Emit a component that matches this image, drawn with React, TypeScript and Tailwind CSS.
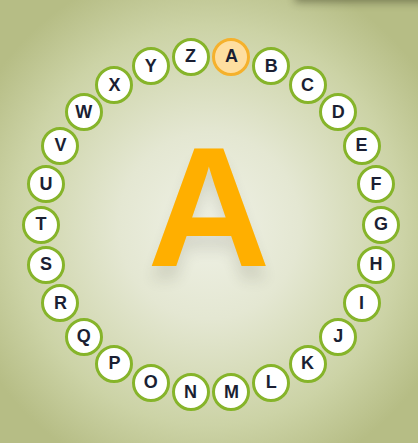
import React from "react";

const letters = "ABCDEFGHIJKLMNOPQRSTUVWXYZ".split("");

export default function App() {
  const cx = 211;
  const cy = 224.5;
  const rx = 170;
  const ry = 169;
  const step = 360 / letters.length;

  return (
    <div
      className="relative w-[418px] h-[443px] overflow-hidden flex justify-center pt-[122px] bg-[radial-gradient(ellipse_62%_60%_at_50%_51%,#eff1e6_0%,#e4e7d2_35%,#ccd3a6_75%,#b6bd85_100%)]"
      style={{ fontFamily: '"Liberation Sans", Arial, sans-serif' }}
    >
      {/* shadow of the bar above the frame */}
      <div className="absolute -top-[12px] left-[295px] right-[-20px] h-[12px] shadow-[0_2px_9px_rgba(40,40,20,0.45)]" />

      <div className="text-[170px] leading-none font-bold text-[#ffaf00] [text-shadow:0_14px_14px_rgba(60,60,40,0.12)] select-none">
        A
      </div>

      {letters.map((l, i) => {
        const a = ((-90 + step / 2 + i * step) * Math.PI) / 180;
        const x = cx + rx * Math.cos(a);
        const y = cy + ry * Math.sin(a);
        const active = i === 0;
        return (
          <div
            key={l}
            className={`absolute w-[38px] h-[38px] -ml-[19px] -mt-[19px] rounded-full border-[3px] flex items-center justify-center text-[18px] font-bold text-[#1b1f33] ${
              active ? "border-[#f5b12c] bg-[#fedea0]" : "border-[#86b42a] bg-white"
            }`}
            style={{ left: x, top: y }}
          >
            {l}
          </div>
        );
      })}
    </div>
  );
}
